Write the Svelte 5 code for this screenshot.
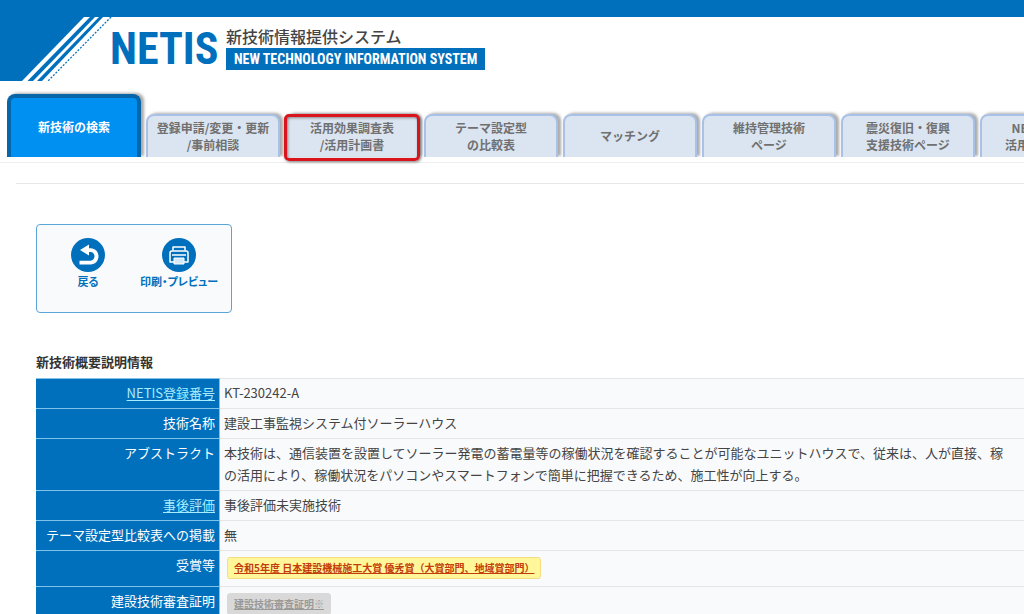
<script>
  const tabs = [
    { lines: ['新技術の検索'], active: true },
    { lines: ['登録申請/変更・更新', '/事前相談'] },
    { lines: ['活用効果調査表', '/活用計画書'], marked: true },
    { lines: ['テーマ設定型', 'の比較表'] },
    { lines: ['マッチング'] },
    { lines: ['維持管理技術', 'ページ'] },
    { lines: ['震災復旧・復興', '支援技術ページ'] },
    { lines: ['NETISプラス', '活用促進技術等'] }
  ];

  const rows = [
    { label: 'NETIS登録番号', link: true, lines: ['KT-230242-A'] },
    { label: '技術名称', lines: ['建設工事監視システム付ソーラーハウス'] },
    {
      label: 'アブストラクト',
      lines: [
        '本技術は、通信装置を設置してソーラー発電の蓄電量等の稼働状況を確認することが可能なユニットハウスで、従来は、人が直接、稼',
        'の活用により、稼働状況をパソコンやスマートフォンで簡単に把握できるため、施工性が向上する。'
      ]
    },
    { label: '事後評価', link: true, lines: ['事後評価未実施技術'] },
    { label: 'テーマ設定型比較表への掲載', lines: ['無'] },
    {
      label: '受賞等',
      badge: '令和5年度 日本建設機械施工大賞 優秀賞（大賞部門、地域賞部門）',
      tone: 'award'
    },
    { label: '建設技術審査証明', badge: '建設技術審査証明※', tone: 'muted' }
  ];
</script>

<header>
  <svg class="stripes" viewBox="0 0 112 64" width="112" height="64" aria-hidden="true">
    <path fill="#0070bd" d="M0 0H84L22 64H0Z" />
    <path fill="#0070bd" d="M90 0H95L33 64H27.500Z" />
    <path fill="#0070bd" d="M99 0H103L42 64H37Z" />
    <path d="M111 0L48 64" stroke="#0070bd" stroke-width="1.300" stroke-dasharray="2 1.500" />
  </svg>
  <div class="logo">NETIS</div>
  <div class="titles">
    <div class="ja">新技術情報提供システム</div>
    <div class="en">NEW TECHNOLOGY INFORMATION SYSTEM</div>
  </div>
</header>

<nav>
  {#each tabs as tab}
    <a href="#top" class="tab" class:active={tab.active} class:marked={tab.marked}>
      {#each tab.lines as line}<span>{line}</span>{/each}
    </a>
  {/each}
</nav>

<main>
  <hr />
  <div class="tools">
    <button>
      <svg viewBox="0 0 34 34" width="34" height="34" aria-hidden="true">
        <circle cx="17" cy="17" r="17" fill="#0070bd" />
        <path fill="#fff" d="M9 12L18 6.500V10.200H19.500C24.500 10.200 27.500 14 27.500 18.200S24.500 26.500 19.500 26.500H8.500V22.700H19.500C22 22.700 23.500 20.500 23.500 18.300S22 14 19.500 14H18V17.500Z" />
      </svg>
      戻る
    </button>
    <button>
      <svg viewBox="0 0 34 34" width="34" height="34" aria-hidden="true">
        <circle cx="17" cy="17" r="17" fill="#0070bd" />
        <g fill="none" stroke="#fff" stroke-width="1.500" stroke-linejoin="round">
          <path d="M11 12.500V9H23V12.500" />
          <path d="M12 24H8V15Q8 13 10 13H24Q26 13 26 15V24H22" />
          <path d="M10 17H24" />
        </g>
        <path fill="#d5e8f7" stroke="#fff" d="M12 20H22V26H12Z" />
      </svg>
      印刷・プレビュー
    </button>
  </div>

  <h1>新技術概要説明情報</h1>
  <table>
    <tbody>
      {#each rows as row}
        <tr>
          <th scope="row">
            {#if row.link}<a href="#top">{row.label}</a>{:else}{row.label}{/if}
          </th>
          <td>
            {#if row.badge}
              <a href="#top" class="badge {row.tone}">{row.badge}</a>
            {:else}
              {#each row.lines as line}<div>{line}</div>{/each}
            {/if}
          </td>
        </tr>
      {/each}
    </tbody>
  </table>
</main>

<style>
  :global(body) {
    overflow: hidden;
    background: #fff;
    color: #444;
    font: 13px/22px "Noto Sans CJK JP", sans-serif;
  }
  header {
    display: flex;
    border-top: 17px solid #0070bd;
    color: #0070bd;
  }
  .stripes {
    flex: none;
    margin-right: -2px;
  }
  .logo {
    width: 114px;
    font: bold 44px/64px "Roboto Condensed", "Liberation Sans Narrow", "DejaVu Sans Condensed", sans-serif;
  }
  .titles {
    padding: 7px 0 0 2px;
    white-space: nowrap;
  }
  .ja {
    color: #444;
    font-size: 16px;
    font-weight: 500;
    line-height: 24px;
  }
  .en {
    padding: 0 8px;
    background: #0070bd;
    color: #fff;
    font: bold 14px/22px "Roboto Condensed", "Liberation Sans Narrow", "DejaVu Sans Condensed", sans-serif;
  }
  nav {
    display: flex;
    align-items: flex-end;
    gap: 5px;
    padding: 13px 0 5px 7px;
    border-bottom: 1px solid #eee;
  }
  .tab {
    position: relative;
    box-sizing: border-box;
    flex: none;
    display: flex;
    flex-direction: column;
    align-items: center;
    justify-content: center;
    width: 134px;
    height: 43px;
    padding-bottom: 2px;
    border: 2px solid #a9c1e6;
    border-bottom: 0;
    border-radius: 8px 8px 0 0;
    background: #dbe5f1;
    box-shadow: 3px -1px 3px #aaa;
    clip-path: inset(-6px -6px 0 -6px);
    color: #707070;
    font-size: 12px;
    font-weight: bold;
    line-height: 17px;
    text-decoration: none;
    white-space: nowrap;
  }
  .tab.active {
    height: 63px;
    border: 4px solid #0766a8;
    border-bottom: 0;
    background: #0090f2;
    color: #fff;
  }
  .tab.marked {
    clip-path: none;
  }
  .tab.marked::after {
    content: "";
    position: absolute;
    inset: -2px -3px -4px -3px;
    border: 3px solid #d9141c;
    border-radius: 5px;
    box-shadow: 1px 1px 3px #777, inset 1px 1px 3px #888;
  }
  main {
    padding: 0 0 0 36px;
  }
  hr {
    margin: 20px 0 40px -20px;
    border: 0;
    border-top: 1px solid #e8e8e8;
  }
  .tools {
    box-sizing: border-box;
    display: flex;
    align-items: flex-start;
    justify-content: space-between;
    width: 196px;
    height: 89px;
    padding: 13px 13px 0 31px;
    border: 1px solid #5aa5d8;
    border-radius: 4px;
    background: #f8fafc;
  }
  button {
    display: flex;
    flex-direction: column;
    align-items: center;
    min-width: 40px;
    padding: 0;
    border: 0;
    background: none;
    color: #0070bd;
    font: bold 11px/18px "Noto Sans CJK JP", sans-serif;
    font-feature-settings: "palt";
    white-space: nowrap;
  }
  h1 {
    margin: 38px 0 5px;
    color: #333;
    font-size: 13px;
    font-weight: bold;
    line-height: 22px;
  }
  table {
    width: 100%;
    border-collapse: collapse;
    white-space: nowrap;
  }
  th {
    width: 174px;
    padding: 3px 4px 4px;
    border: 1px solid #7fc3ea;
    border-left-color: #0070bd;
    background: #0070bd;
    color: #fff;
    font-weight: normal;
    text-align: right;
    vertical-align: top;
  }
  th a {
    color: #a8ecff;
    text-underline-offset: 2px;
  }
  td {
    padding: 3px 0 4px 4px;
    border-top: 1px solid #e4e7ea;
    border-bottom: 1px solid #e4e7ea;
    background: #f9fafc;
  }
  .badge {
    display: block;
    width: fit-content;
    margin: 3px 0 3px 3px;
    padding: 0 6px;
    border: 1px solid #f5dc83;
    border-radius: 3px;
    background: #fff799;
    color: #c33c0c;
    font-size: 10px;
    font-weight: bold;
    line-height: 20px;
  }
  .badge.muted {
    border-color: #d9d9d9;
    background: #d9d9d9;
    color: #999;
  }
</style>
